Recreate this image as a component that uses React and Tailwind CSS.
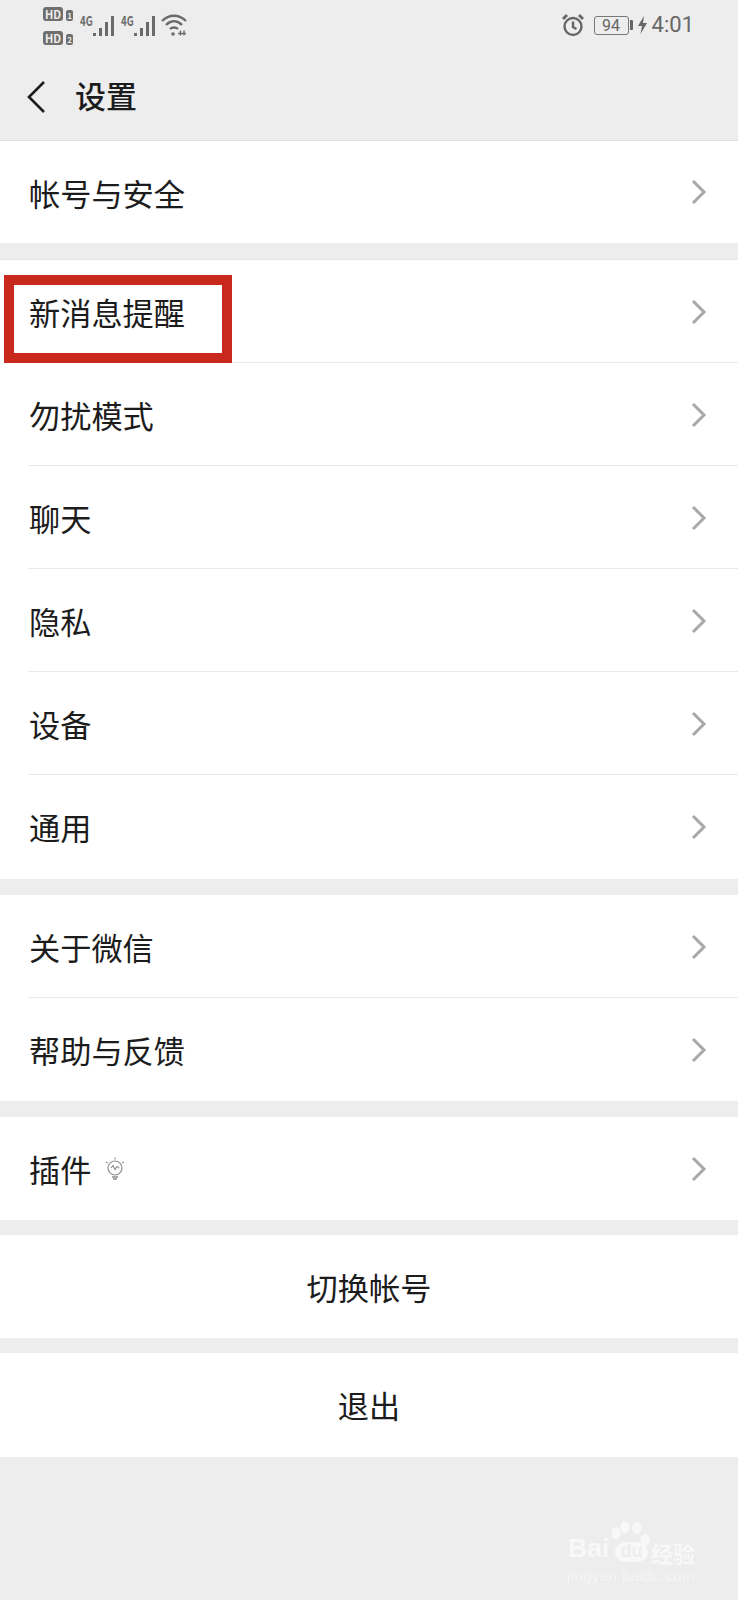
const Chevron = () => (
  <svg width="18" height="28" viewBox="0 0 18 28" fill="none" className="shrink-0">
    <path d="M3 3 L14 14 L3 25" stroke="#a8a8a8" strokeWidth="3" />
  </svg>
);

const Row = ({ label, last, extra, h = "h-[103px]" }) => (
  <div className={`${h} pl-[29px] relative flex items-center`}>
    <span className="text-[31.2px] leading-none text-[#1c1c1c] mt-[1px]">{label}</span>
    {extra}
    <div className="ml-auto mr-[30px]"><Chevron /></div>
    {!last && <div className="absolute left-[28px] right-0 bottom-0 h-px bg-[#e9e9e9]" />}
  </div>
);

const Hd = ({ n }) => (
  <div className="flex items-end gap-[3px] h-[16px]">
    <span className="w-[20px] h-[14px] rounded-[3px] bg-[#6f6f6f] text-[#ececec] text-[11px] leading-[14px] font-bold text-center">HD</span>
    <span className="w-[7px] h-[11px] rounded-[2px] bg-[#6f6f6f] text-[#ececec] text-[8px] leading-[11px] font-bold text-center">{n}</span>
  </div>
);

const Signal = () => (
  <div className="flex items-start w-[35px] h-[30px] relative">
    <span className="text-[13px] leading-none font-bold text-[#6a6a6a] mt-[0px] scale-x-75 origin-left">4G</span>
    <svg width="24" height="24" viewBox="0 0 24 24" className="absolute left-[13px] top-[0px]" fill="#6a6a6a">
      <rect x="0" y="19" width="3" height="3" />
      <rect x="6" y="14" width="3" height="8" />
      <rect x="12" y="8" width="3" height="14" />
      <rect x="18" y="2" width="3" height="20" />
    </svg>
  </div>
);

const Wifi = () => (
  <svg width="28" height="24" viewBox="0 0 28 24" fill="none" stroke="#6a6a6a" strokeWidth="2.4">
    <path d="M2 8 C9 1 19 1 26 8" />
    <path d="M6 12 C11 7 17 7 22 12" />
    <path d="M10 16 C12 14 16 14 18 16" />
    <circle cx="13" cy="21" r="1.8" fill="#6a6a6a" stroke="none" />
    <path d="M18 20.5 h8" strokeWidth="1.4" />
    <path d="M20.5 17.5 v5 M24 17.5 v5" strokeWidth="1.4" />
  </svg>
);

const Alarm = () => (
  <svg width="24" height="24" viewBox="0 0 24 24" fill="none" stroke="#666" strokeWidth="2.4">
    <circle cx="12" cy="13.5" r="8.5" />
    <path d="M12 8.5 V14 L15.5 16" />
    <path d="M2 6 L6 2 M22 6 L18 2" strokeWidth="2.8" />
  </svg>
);

const Bulb = () => (
  <svg width="20" height="26" viewBox="0 0 20 26" fill="none" stroke="#8f8f8f" strokeWidth="1.2" className="ml-[14px] shrink-0">
    <circle cx="10" cy="12" r="7" />
    <path d="M6 12 L8 9.5 L10 13.5 L12 10.5 L14 12" />
    <path d="M7 21 H13 M8 23 H12" strokeWidth="1.3" />
    <path d="M10 1.5 V3.5 M1 6 L2.6 7 M19 6 L17.4 7" />
  </svg>
);

export default function App() {
  return (
    <div className="w-[738px] h-[1600px] bg-[#ededed] relative overflow-hidden font-['Noto_Sans_CJK_SC','Noto_Sans',sans-serif]">
      <div className="h-[141px] border-b border-[#dedede] flex flex-col">
        <div className="h-[60px] flex items-start pt-[5px] pl-[43px] pr-[44px]">
          <div className="flex flex-col gap-[8px] w-[36px]">
            <Hd n="1" />
            <Hd n="2" />
          </div>
          <div className="flex gap-[6px] mt-[9px] ml-[1px]">
            <Signal />
            <Signal />
            <div className="-mt-[1px] -ml-[2px]"><Wifi /></div>
          </div>
          <div className="ml-auto flex items-center mt-[8px] text-[#666] font-['Roboto',sans-serif]">
            <Alarm />
            <span className="ml-[9px] w-[35px] h-[19px] border border-[#777] rounded-[3px] text-[16px] leading-[17px] text-center">94</span>
            <span className="ml-[1px] w-[3px] h-[10px] bg-[#666] rounded-r-[1px]" />
            <svg width="11" height="20" viewBox="0 0 11 18" fill="#666" className="ml-[4px]">
              <path d="M7 0 L1 10 H5 L3.5 18 L10 7 H6 Z" />
            </svg>
            <span className="ml-[4px] text-[22px] leading-none">4:01</span>
          </div>
        </div>
        <div className="flex items-center h-[74px] pl-[26px]">
          <svg width="22" height="34" viewBox="0 0 22 34" fill="none">
            <path d="M18 2 L3 17 L18 32" stroke="#1c1c1c" strokeWidth="2.6" />
          </svg>
          <span className="ml-[27px] text-[31px] leading-none font-medium text-[#1c1c1c] -mt-[6px]">设置</span>
        </div>
      </div>

      <div className="bg-white mb-[16px]"><Row label="帐号与安全" last h="h-[102px]" /></div>
      <div className="bg-white mb-[16px] border-t border-[#e6e6e6] pb-[1px]">
        <Row label="新消息提醒" />
        <Row label="勿扰模式" />
        <Row label="聊天" />
        <Row label="隐私" />
        <Row label="设备" />
        <Row label="通用" last />
      </div>
      <div className="bg-white mb-[16px]">
        <Row label="关于微信" />
        <Row label="帮助与反馈" last />
      </div>
      <div className="bg-white mb-[15px]"><Row label="插件" last extra={<Bulb />} /></div>
      <div className="bg-white mb-[15px] h-[103px] flex items-center justify-center text-[31.2px] leading-none text-[#1c1c1c]">切换帐号</div>
      <div className="bg-white h-[104px] flex items-center justify-center text-[31.2px] leading-none text-[#1c1c1c]">退出</div>

      <div className="absolute left-[4px] top-[275px] w-[228px] h-[88px] border-[10px] border-[#c9281c]" />

      <div className="absolute left-[566px] top-[1518px] w-[140px] h-[70px]">
        <svg width="40" height="36" viewBox="0 0 40 36" className="absolute left-[44px] top-[3px]" fill="#f8f8f8">
          <ellipse cx="6" cy="12" rx="4.5" ry="6" />
          <ellipse cx="15" cy="6" rx="4.5" ry="6" />
          <ellipse cx="27" cy="7" rx="4.5" ry="6" />
          <ellipse cx="35" cy="19" rx="4.5" ry="6" />
        </svg>
        <span className="absolute left-[2px] top-[17px] text-[26.5px] leading-none font-bold font-['Liberation_Sans',sans-serif] text-[#f8f8f8]">Bai</span>
        <span className="absolute left-[49px] top-[24px] w-[33px] h-[20px] rounded-full bg-[#f8f8f8] text-[#ededed] text-[18px] leading-[18px] text-center font-bold font-['Liberation_Sans',sans-serif]">du</span>
        <span className="absolute left-[85px] top-[20px] text-[22px] leading-[28px] font-bold text-[#f8f8f8]">经验</span>
        <span className="absolute left-[1px] top-[50px] text-[15px] leading-none tracking-[0.4px] text-[#f5f5f5] font-['Liberation_Sans',sans-serif]">jingyan.baidu.com</span>
      </div>
    </div>
  );
}
